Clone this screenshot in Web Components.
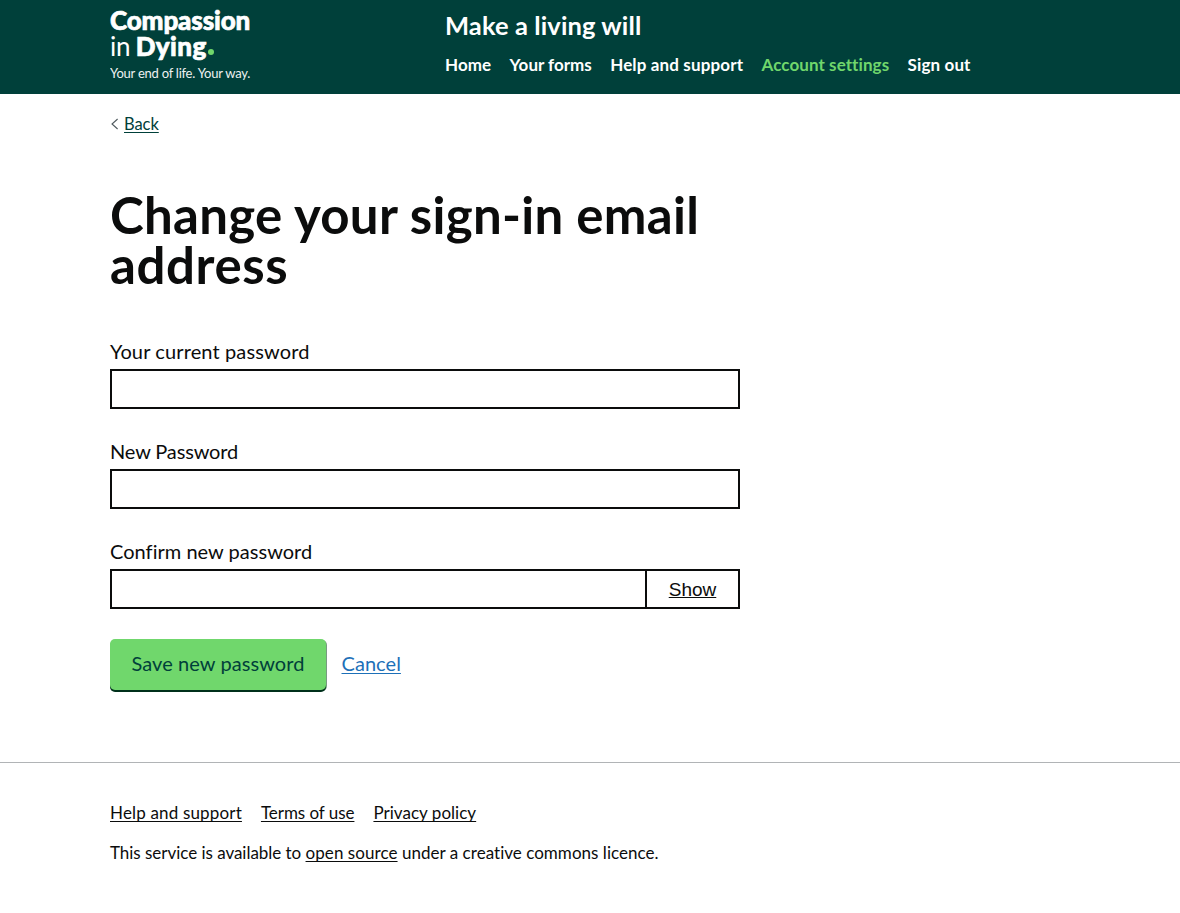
<!DOCTYPE html>
<html lang="en">
<head>
<meta charset="utf-8">
<title>Make a living will</title>
<style>
body { margin: 0; background: #fff; color: #0b0c0c; font-family: Lato, "Open Sans", sans-serif; }
</style>
</head>
<body>
<site-header></site-header>
<main-content></main-content>
<site-footer></site-footer>
<script>
const define = (name, html) => {
  const template = document.createElement('template');
  template.innerHTML = html;
  customElements.define(name, class extends HTMLElement {
    constructor() {
      super();
      this.attachShadow({ mode: 'open' }).append(template.content.cloneNode(true));
    }
  });
};

define('brand-logo', `
<style>
:host { display: block; width: 335px; color: #fff; white-space: nowrap; }
div { line-height: 25px; font-size: 26px; }
b { font-weight: 900; -webkit-text-stroke: .7px #fff; }
.one { letter-spacing: -.13px; }
.two { padding-top: 1px; }
.two b { letter-spacing: .4px; }
.two span { letter-spacing: -.2px; word-spacing: -1px; }
.two i { display: inline-block; width: 6px; height: 6px; border-radius: 50%; background: #70d76c; margin-left: 1px; position: relative; top: -1px; }
.tag { font-size: 13px; line-height: 18px; letter-spacing: -.24px; margin-top: 5px; opacity: .93; }
</style>
<div class="one"><b>Compassion</b></div>
<div class="two"><span>in </span><b>Dying</b><i></i></div>
<div class="tag">Your end of life. Your way.</div>`);

define('nav-link', `
<style>
:host { display: block; font-size: 17px; line-height: 20px; font-weight: 700; color: #fff; white-space: nowrap; letter-spacing: var(--ls, .08px); }
:host([current]) { color: #70d76c; }
a { color: inherit; text-decoration: none; }
</style>
<a href="#"><slot></slot></a>`);

define('site-header', `
<style>
:host { display: flex; box-sizing: border-box; height: 94px; padding: 8px 0 0 110px; background: #00403a; }
h2 { margin: 2px 0 15px; font-size: 25.5px; line-height: 30px; font-weight: 700; letter-spacing: .1px; color: #fff; }
nav { display: flex; gap: 18.4px; }
</style>
<brand-logo></brand-logo>
<div>
<h2>Make a living will</h2>
<nav>
<nav-link style="--ls:.05px">Home</nav-link><nav-link style="--ls:0px">Your forms</nav-link><nav-link style="--ls:.14px">Help and support</nav-link><nav-link current>Account settings</nav-link><nav-link style="--ls:.12px">Sign out</nav-link>
</nav>
</div>`);

define('text-link', `
<style>
:host { display: inline; }
a { color: inherit; text-decoration: underline; text-decoration-thickness: 1px; text-underline-offset: 2px; text-decoration-skip-ink: none; }
</style>
<a href="#"><slot></slot></a>`);

define('back-link', `
<style>
:host { display: flex; align-items: center; height: 20px; font-size: 16.5px; line-height: 20px; letter-spacing: -.06px; color: #00403a; }
svg { width: 14px; height: 14px; display: block; }
</style>
<svg viewBox="0 0 14 14" fill="none" stroke="#505a5f" stroke-width="1.1"><path d="M7.6 2 2 7l5.6 5"/></svg>
<text-link><slot></slot></text-link>`);

define('password-field', `
<style>
:host { display: block; margin-bottom: 30px; }
label { display: block; font-size: 20px; line-height: 25px; letter-spacing: var(--ls, .12px); margin-bottom: 5px; }
.row { display: flex; }
input { flex: 1; min-width: 0; height: 40px; box-sizing: border-box; border: 2px solid #0b0c0c; border-radius: 0; margin: 0; padding: 5px; background: #fff; }
button { display: none; }
:host([toggle]) button { display: block; width: 95px; height: 40px; margin: 0 0 0 -2px; padding: 1px 0 0; border: 2px solid #0b0c0c; background: #fff; color: #0b0c0c; font: 19px/35px "Liberation Sans", Arial, sans-serif; text-decoration: underline; text-decoration-thickness: 1px; text-underline-offset: 1px; }
</style>
<label for="f"><slot></slot></label>
<div class="row"><input id="f" type="password"><button type="button">Show</button></div>`);

define('save-button', `
<style>
:host { display: block; }
button { display: block; width: 216px; height: 51px; margin: 0; border: 0; border-radius: 5px; background: #70d76c; color: #00403a; font: 20px/49px Lato, sans-serif; letter-spacing: .08px; box-shadow: 0 2px 0 #00301b, 1px 1px 0 #789b80; padding: 0 0 2px; }
</style>
<button type="button"><slot></slot></button>`);

define('main-content', `
<style>
:host { display: block; width: 630px; padding: 20px 0 70px 110px; }
h1 { margin: 56px 0 49px; font-size: 51px; line-height: 50px; font-weight: 700; letter-spacing: .28px; white-space: nowrap; }
h1 span { letter-spacing: .6px; }
.actions { display: flex; align-items: flex-start; gap: 15.5px; height: 53px; }
.cancel { font-size: 20px; line-height: 49px; letter-spacing: .05px; color: #1d70b8; }
</style>
<back-link>Back</back-link>
<h1>Change your sign-in email<br><span>address</span></h1>
<password-field>Your current password</password-field>
<password-field style="--ls:-.14px">New Password</password-field>
<password-field toggle style="--ls:.03px">Confirm new password</password-field>
<div class="actions"><save-button>Save new password</save-button><text-link class="cancel">Cancel</text-link></div>`);

define('site-footer', `
<style>
:host { display: block; border-top: 1px solid #b1b4b6; padding: 40px 0 50px 110px; font-size: 17px; line-height: 20px; }
nav { display: flex; gap: 19px; margin-bottom: 20px; }
p { margin: 0; letter-spacing: .03px; }
p text-link { letter-spacing: .07px; }
.lead { letter-spacing: -.03px; }
</style>
<nav><text-link style="letter-spacing:.17px">Help and support</text-link><text-link style="letter-spacing:-.05px">Terms of use</text-link><text-link style="letter-spacing:.03px">Privacy policy</text-link></nav>
<p><span class="lead">This service is available to </span><text-link>open source</text-link> under a creative commons licence.</p>`);
</script>
</body>
</html>
